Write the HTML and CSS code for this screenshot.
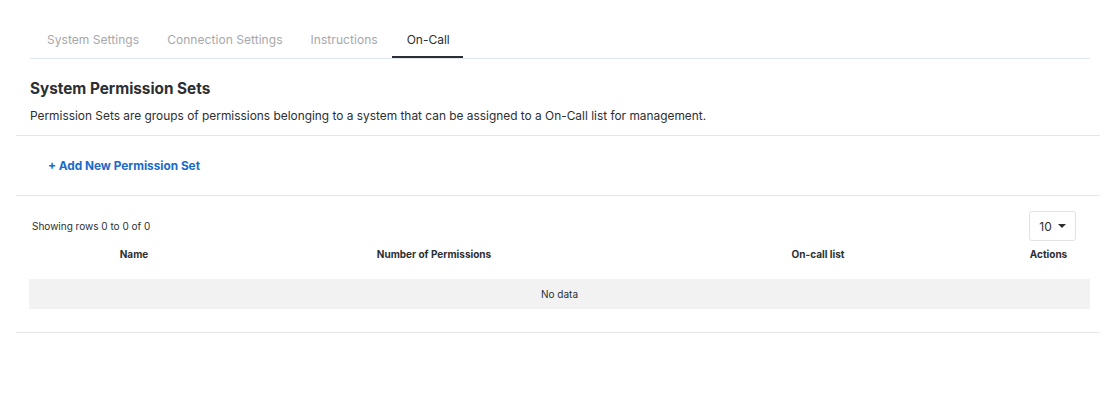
FILE: index.html
```html
<!DOCTYPE html>
<html>
<head>
<meta charset="utf-8">
<link rel="stylesheet" href="styles.css">
</head>
<body>
<div class="page">
  <nav class="tabs">
    <a class="tab">System Settings</a>
    <a class="tab">Connection Settings</a>
    <a class="tab">Instructions</a>
    <a class="tab active">On-Call</a>
  </nav>
  <section class="intro">
    <h2 class="title">System Permission Sets</h2>
    <p class="desc">Permission Sets are groups of permissions belonging to a system that can be assigned to a On-Call list for management.</p>
  </section>
  <div class="actions-bar">
    <a class="add-link">+ Add New Permission Set</a>
  </div>
  <div class="table-section">
    <div class="table-top">
      <span class="showing">Showing rows 0 to 0 of 0</span>
      <button class="page-size">10 <span class="caret"></span></button>
    </div>
    <table class="data-table">
      <colgroup>
        <col class="c1"><col class="c2"><col class="c3"><col class="c4">
      </colgroup>
      <thead>
        <tr><th>Name</th><th>Number of Permissions</th><th>On-call list</th><th>Actions</th></tr>
      </thead>
      <tbody>
        <tr class="empty"><td colspan="4">No data</td></tr>
      </tbody>
    </table>
  </div>
</div>
</body>
</html>
```
FILE: styles.css
```css
* { box-sizing: border-box; }
body {
  margin: 0;
  background: #fff;
  font-family: "Inter", "Noto Sans", sans-serif;
  color: #2b2f33;
}
.page {
  padding: 0 16px;
  width: 1116px;
}
.tabs {
  display: flex;
  margin: 0 10px 0 14px;
  padding-top: 31px;
  padding-left: 3px;
  border-bottom: 1px solid #dde6f2;
}
.tab {
  padding: 0 14px 8px;
  font-size: 12px;
  line-height: 17px;
  letter-spacing: 0.05px;
  color: #a6a8ab;
  border-bottom: 2px solid transparent;
}
.tab.active {
  color: #2b2f33;
  border-bottom-color: #2b2f33;
  padding: 0 13px 8px 15px;
  letter-spacing: 0;
}
.intro {
  padding: 20px 14px 11px;
  border-bottom: 1px solid #e6e6e6;
}
.title {
  margin: 0;
  font-size: 15.3px;
  line-height: 20px;
  font-weight: 700;
}
.desc {
  margin: 9px 0 0;
  font-size: 11.9px;
  line-height: 16px;
}
.actions-bar {
  padding: 18px 32px 0;
  border-bottom: 1px solid #e6e6e6;
  height: 60px;
}
.add-link {
  font-size: 11.8px;
  font-weight: 700;
  line-height: 16px;
  color: #1b6ac9;
}
.table-section {
  padding: 15px 10px 23px 13px;
  border-bottom: 1px solid #e6e6e6;
}
.table-top {
  display: flex;
  justify-content: space-between;
  align-items: center;
  padding-left: 3px;
}
.showing {
  font-size: 10px;
  color: #2b2f33;
}
.page-size {
  width: 47px;
  height: 30px;
  border: 1px solid #e2e2e2;
  border-radius: 3px;
  background: #fff;
  font-family: inherit;
  font-size: 12px;
  color: #2b2f33;
  display: flex;
  align-items: center;
  justify-content: center;
  gap: 6px;
  margin-right: 14px;
  padding: 0;
}
.caret {
  width: 0;
  height: 0;
  border-left: 4px solid transparent;
  border-right: 4px solid transparent;
  border-top: 4px solid #2b2f33;
}
.data-table {
  width: 1061px;
  border-collapse: collapse;
  table-layout: fixed;
  margin-top: 2px;
}
.c1 { width: 210px; }
.c2 { width: 390px; }
.c3 { width: 378px; }
.c4 { width: 83px; }
.data-table th {
  font-size: 10px;
  font-weight: 700;
  line-height: 12px;
  height: 36px;
  padding: 5px 0 0;
  vertical-align: top;
  text-align: center;
}
.empty td {
  background: #f2f2f2;
  height: 30px;
  padding: 0;
  text-align: center;
  font-size: 10px;
}
```
